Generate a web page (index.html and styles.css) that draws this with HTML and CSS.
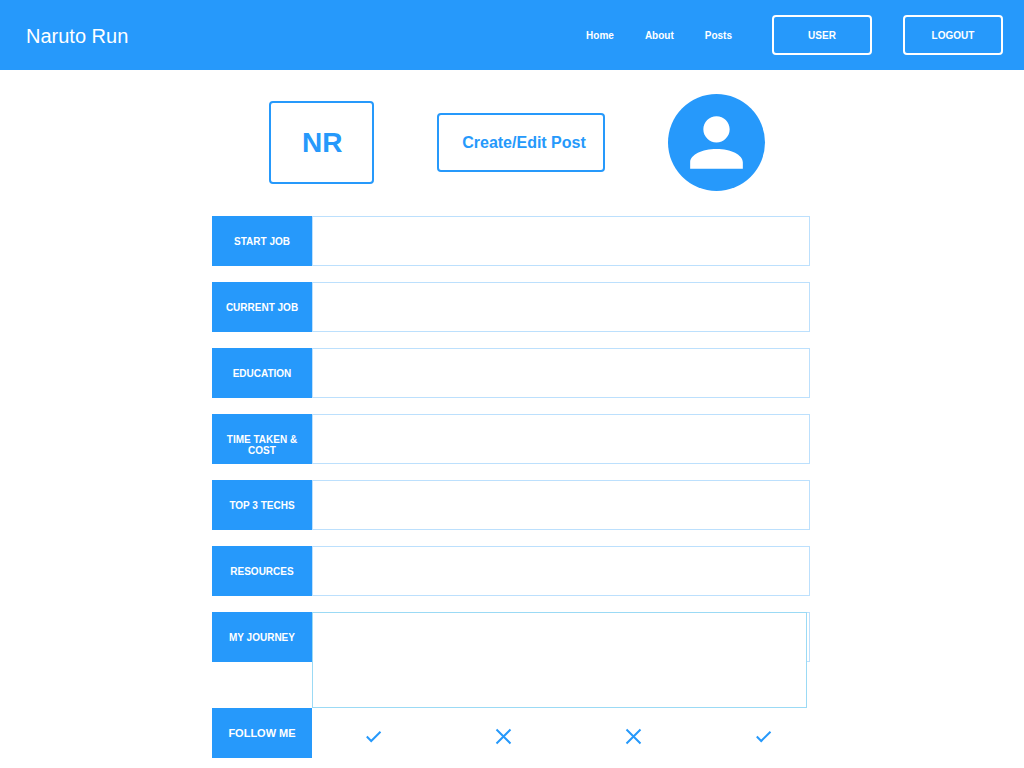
FILE: index.html
```html
<!DOCTYPE html>
<html lang="en">
<head>
<meta charset="utf-8">
<meta name="viewport" content="width=device-width, initial-scale=1">
<title>Naruto Run</title>
<link rel="stylesheet" href="styles.css">
</head>
<body>
<header class="header">
  <h1 class="brand">Naruto Run</h1>
  <nav class="nav">
    <a href="#home">Home</a>
    <a href="#about">About</a>
    <a href="#posts">Posts</a>
  </nav>
  <div class="account">
    <button class="account-button" type="button">USER</button>
    <button class="account-button" type="button">LOGOUT</button>
  </div>
</header>
<main class="main">
  <div class="tools">
    <button class="outline initials" type="button">NR</button>
    <button class="outline create" type="button">Create/Edit Post</button>
    <div class="avatar">
      <svg class="person" viewBox="0 0 24 24" role="img" aria-label="Profile picture"><path d="M12 12c2.21 0 4-1.79 4-4s-1.79-4-4-4-4 1.79-4 4 1.79 4 4 4zm0 2c-4.4 0-8 1.8-8 4v2h16v-2c0-2.2-3.6-4-8-4z"/></svg>
    </div>
  </div>
  <form class="form">
    <div class="row"><label class="label" for="start">START JOB</label><input class="field" id="start" type="text"></div>
    <div class="row"><label class="label" for="current">CURRENT JOB</label><input class="field" id="current" type="text"></div>
    <div class="row"><label class="label" for="education">EDUCATION</label><input class="field" id="education" type="text"></div>
    <div class="row"><label class="label" for="time">TIME TAKEN &amp; COST</label><input class="field" id="time" type="text"></div>
    <div class="row"><label class="label" for="techs">TOP 3 TECHS</label><input class="field" id="techs" type="text"></div>
    <div class="row"><label class="label" for="resources">RESOURCES</label><input class="field" id="resources" type="text"></div>
    <div class="row journey">
      <label class="label" for="journey">MY JOURNEY</label>
      <div class="field backing"></div>
      <textarea class="story" id="journey"></textarea>
    </div>
    <div class="row">
      <span class="label follow">FOLLOW ME</span>
      <div class="marks">
        <svg class="mark" viewBox="0 0 15 15" role="img" aria-label="Yes"><path d="M0.8 7.5 5.2 12 14.5 2.8"/></svg>
        <svg class="mark" viewBox="0 0 15 15" role="img" aria-label="No"><path d="M0.5 0.5 14.5 14.5M14.5 0.5 0.5 14.5"/></svg>
        <svg class="mark" viewBox="0 0 15 15" role="img" aria-label="No"><path d="M0.5 0.5 14.5 14.5M14.5 0.5 0.5 14.5"/></svg>
        <svg class="mark" viewBox="0 0 15 15" role="img" aria-label="Yes"><path d="M0.8 7.5 5.2 12 14.5 2.8"/></svg>
      </div>
    </div>
  </form>
</main>
</body>
</html>
```

FILE: styles.css
```css
:root {
  --blue: #2699fb;
  --pale: #bce0fd;
  --sky: #9bdaf5;
}

* {
  box-sizing: border-box;
}

body {
  margin: 0;
  background: #fff;
  font-family: "Liberation Sans", Arial, sans-serif;
}

button {
  font-family: inherit;
  font-weight: bold;
  cursor: pointer;
}

.header {
  display: flex;
  align-items: center;
  min-height: 70px;
  padding: 0 21px 0 26px;
  background: var(--blue);
  color: #fff;
}

.brand {
  margin: 0 auto 0 0;
  padding-top: 2px;
  font-size: 20px;
  font-weight: normal;
  line-height: 24px;
}

.nav {
  display: flex;
  gap: 31px;
  margin-right: 40px;
  padding-top: 2px;
}

.nav a {
  color: #fff;
  font-size: 10px;
  font-weight: bold;
  line-height: 12px;
  text-decoration: none;
}

.account {
  display: flex;
  gap: 31px;
}

.account-button {
  width: 100px;
  height: 40px;
  padding: 0;
  border: 2px solid #fff;
  border-radius: 4px;
  background: transparent;
  color: #fff;
  font-size: 10px;
}

.main {
  max-width: 600px;
  margin: 0 auto;
  padding: 24px 0 10px;
}

.tools {
  display: flex;
  align-items: center;
  justify-content: center;
  gap: 63px;
  padding-left: 10px;
  margin-bottom: 25px;
}

.outline {
  border: 2px solid var(--blue);
  border-radius: 4px;
  background: #fff;
  color: var(--blue);
}

.initials {
  padding: 0 31px;
  height: 83px;
  width: 105px;
  font-size: 28px;
}

.create {
  height: 59px;
  width: 168px;
  padding: 0 17px 0 23px;
  font-size: 16px;
  white-space: nowrap;
}

.avatar {
  display: flex;
  align-items: center;
  justify-content: center;
  width: 97px;
  height: 97px;
  border-radius: 50%;
  background: var(--blue);
}

.person {
  width: 79px;
  height: 79px;
  fill: #fff;
}

.form {
  display: grid;
  gap: 16px;
  padding-right: 2px;
}

.row {
  display: grid;
  grid-template-columns: 100px 1fr;
  align-items: start;
}

.label {
  height: 50px;
  padding: 20px 10px 0;
  background: var(--blue);
  color: #fff;
  font-size: 10px;
  font-weight: bold;
  line-height: 11px;
  text-align: center;
}

.follow {
  font-size: 11px;
}

.field {
  width: 100%;
  height: 50px;
  padding: 0 12px;
  border: 1px solid var(--pale);
  background: #fff;
  font: inherit;
}

.journey {
  margin-bottom: -16px;
}

.backing,
.story {
  grid-column: 2;
  grid-row: 1;
}

.story {
  display: block;
  height: 96px;
  margin-right: 3px;
  padding: 12px;
  border: 1px solid var(--sky);
  background: #fff;
  font: inherit;
  resize: none;
}

.marks {
  display: flex;
  align-items: center;
  justify-content: space-between;
  height: 50px;
  padding: 7px 39px 0 54px;
}

.mark {
  width: 15px;
  height: 15px;
  overflow: visible;
  fill: none;
  stroke: var(--blue);
  stroke-width: 2;
}
```
